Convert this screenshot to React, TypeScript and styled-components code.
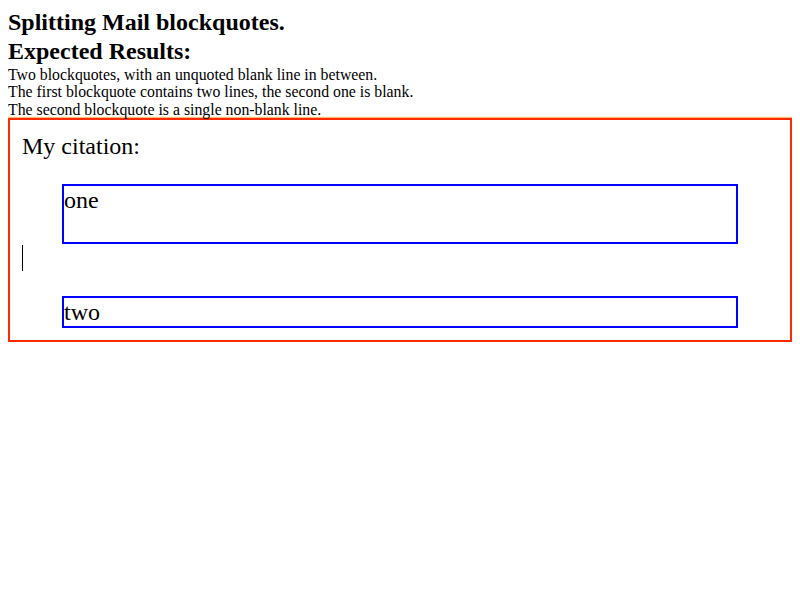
import React from 'react';
import styled, { createGlobalStyle } from 'styled-components';

const GlobalStyle = createGlobalStyle`
  body {
    margin: 8px;
    font-family: "Liberation Serif", "Times New Roman", serif;
    color: #000;
    background: #fff;
  }
`;

const Heading = styled.div`
  font-size: 24px;
  font-weight: bold;
  line-height: 29px;
`;

const Notes = styled.div`
  font-size: 15.8px;
  line-height: 17.33px;
`;

const Editor = styled.div`
  border: 2px solid #ff2a00;
  box-shadow: 0 0 1px 1px rgba(255, 160, 60, 0.7);
  padding: 12px;
  font-size: 24px;
  line-height: 28px;
`;

const Quote = styled.blockquote<{ $lines: number }>`
  margin: 24px 40px 0;
  border: 2px solid #0000ff;
  min-height: ${(p) => p.$lines * 28}px;
`;

const BlankLine = styled.div`
  height: 28px;
  padding-top: 1px;
  box-sizing: border-box;
`;

const Caret = styled.span`
  display: block;
  width: 1px;
  height: 26px;
  background: #000;
`;

export default function App() {
  return (
    <>
      <GlobalStyle />
      <Heading>Splitting Mail blockquotes.</Heading>
      <Heading>Expected Results:</Heading>
      <Notes>
        <div>Two blockquotes, with an unquoted blank line in between.</div>
        <div>The first blockquote contains two lines, the second one is blank.</div>
        <div>The second blockquote is a single non-blank line.</div>
      </Notes>
      <Editor>
        <div>My citation:</div>
        <Quote $lines={2}>one</Quote>
        <BlankLine>
          <Caret />
        </BlankLine>
        <Quote $lines={1}>two</Quote>
      </Editor>
    </>
  );
}
